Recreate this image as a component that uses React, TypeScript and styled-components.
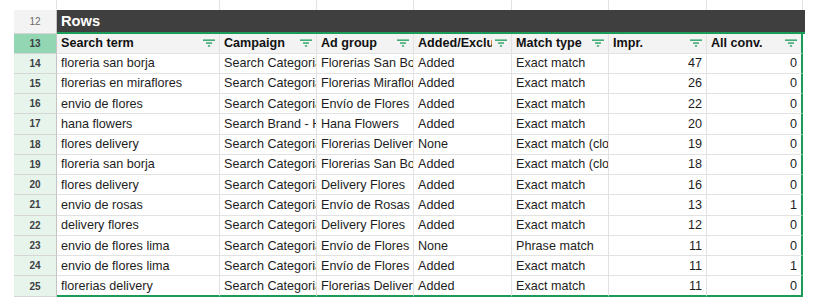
import styled, { createGlobalStyle } from 'styled-components';

const GlobalStyle = createGlobalStyle`
    body {
        margin: 0;
        background: #ffffff;
        font-family: "Liberation Sans", Arial, sans-serif;
    }
`

const COLS = '43px 163px 97px 97px 98px 97px 98px 96px';
const GREEN = '#1a9b57';
const GRID = '#e2e2e2';

const Sheet = styled.div`
    padding-left: 14px;
    width: 789px;
`

const Row = styled.div<{ $h: number }>`
    display: grid;
    grid-template-columns: ${COLS};
    height: ${(p) => p.$h}px;
`

const RowNum = styled.div<{ $tone: 'plain' | 'active' | 'range' | 'blank' }>`
    display: flex;
    align-items: center;
    justify-content: center;
    font-size: 10px;
    font-weight: ${(p) => (p.$tone === 'plain' ? 400 : 600)};
    color: ${(p) => (p.$tone === 'plain' ? '#6b6b6b' : '#3c4043')};
    background: ${(p) =>
        p.$tone === 'active' ? '#93d6b3' : p.$tone === 'range' ? '#e7f4ec' : p.$tone === 'plain' ? '#f3f3f3' : '#ffffff'};
    border-right: 1px solid ${(p) => (p.$tone === 'blank' ? GRID : '#c4c4c4')};
    border-bottom: 1px solid ${(p) => (p.$tone === 'blank' ? 'transparent' : '#d6d6d6')};
    box-sizing: border-box;
`

const Blank = styled.div`
    border-right: 1px solid ${GRID};
    box-sizing: border-box;
`

const Title = styled.div`
    grid-column: span 7;
    margin-right: -2px;
    background: #3f3f3f;
    color: #ffffff;
    font-weight: 700;
    font-size: 14.7px;
    display: flex;
    align-items: center;
    padding-left: 4px;
    border-bottom: 2px solid ${GREEN};
    box-sizing: border-box;
`

const HeadCell = styled.div<{ $last?: boolean }>`
    display: flex;
    align-items: center;
    gap: 3px;
    padding: 0 4px 0 4px;
    background: #f3f3f3;
    border-right: ${(p) => (p.$last ? `2px solid ${GREEN}` : `1px solid ${GRID}`)};
    border-bottom: 1px solid ${GRID};
    box-sizing: border-box;
    overflow: hidden;
`

const HeadLabel = styled.span`
    flex: 1;
    font-size: 12.6px;
    font-weight: 700;
    color: #111;
    white-space: nowrap;
    overflow: hidden;
`

const Cell = styled.div<{ $num?: boolean; $last?: boolean; $bottom?: boolean }>`
    display: flex;
    align-items: center;
    justify-content: ${(p) => (p.$num ? 'flex-end' : 'flex-start')};
    padding: 0 4px;
    font-size: 12.6px;
    color: #1d1d1d;
    white-space: nowrap;
    overflow: hidden;
    border-right: ${(p) => (p.$last ? `2px solid ${GREEN}` : `1px solid ${GRID}`)};
    border-bottom: ${(p) => (p.$bottom ? `2px solid ${GREEN}` : `1px solid ${GRID}`)};
    box-sizing: border-box;
`

const FilterIcon = () => (
    <svg width="12" height="8" viewBox="0 0 12 8" style={{ flex: 'none' }}>
        <rect x="0" y="0.5" width="12" height="1.3" fill={GREEN} />
        <rect x="3" y="3.4" width="6" height="1.3" fill={GREEN} />
        <rect x="4.9" y="6.3" width="2.2" height="1.3" fill={GREEN} />
    </svg>
)

const headers = ['Search term', 'Campaign', 'Ad group', 'Added/Excluded', 'Match type', 'Impr.', 'All conv.'];

const rows = [
    { n: 14, term: 'floreria san borja', camp: 'Search Categorias', group: 'Florerias San Borja', added: 'Added', match: 'Exact match', impr: 47, conv: 0 },
    { n: 15, term: 'florerias en miraflores', camp: 'Search Categorias', group: 'Florerias Miraflores', added: 'Added', match: 'Exact match', impr: 26, conv: 0 },
    { n: 16, term: 'envio de flores', camp: 'Search Categorias', group: 'Envío de Flores', added: 'Added', match: 'Exact match', impr: 22, conv: 0 },
    { n: 17, term: 'hana flowers', camp: 'Search Brand - Hana', group: 'Hana Flowers', added: 'Added', match: 'Exact match', impr: 20, conv: 0 },
    { n: 18, term: 'flores delivery', camp: 'Search Categorias', group: 'Florerias Delivery', added: 'None', match: 'Exact match (close variant)', impr: 19, conv: 0 },
    { n: 19, term: 'floreria san borja', camp: 'Search Categorias', group: 'Florerias San Borja', added: 'Added', match: 'Exact match (close variant)', impr: 18, conv: 0 },
    { n: 20, term: 'flores delivery', camp: 'Search Categorias', group: 'Delivery Flores', added: 'Added', match: 'Exact match', impr: 16, conv: 0 },
    { n: 21, term: 'envio de rosas', camp: 'Search Categorias', group: 'Envío de Rosas', added: 'Added', match: 'Exact match', impr: 13, conv: 1 },
    { n: 22, term: 'delivery flores', camp: 'Search Categorias', group: 'Delivery Flores', added: 'Added', match: 'Exact match', impr: 12, conv: 0 },
    { n: 23, term: 'envio de flores lima', camp: 'Search Categorias', group: 'Envío de Flores', added: 'None', match: 'Phrase match', impr: 11, conv: 0 },
    { n: 24, term: 'envio de flores lima', camp: 'Search Categorias', group: 'Envío de Flores Lima', added: 'Added', match: 'Exact match', impr: 11, conv: 1 },
    { n: 25, term: 'florerias delivery', camp: 'Search Categorias', group: 'Florerias Delivery', added: 'Added', match: 'Exact match', impr: 11, conv: 0 },
]

const App = () => {
    return (
        <Sheet>
            <GlobalStyle />
            <Row $h={10}>
                <RowNum $tone="blank" />
                {headers.map((h) => <Blank key={h} />)}
            </Row>
            <Row $h={24}>
                <RowNum $tone="plain">12</RowNum>
                <Title>Rows</Title>
            </Row>
            <Row $h={19.5}>
                <RowNum $tone="active">13</RowNum>
                {headers.map((h, i) => (
                    <HeadCell key={h} $last={i === headers.length - 1}>
                        <HeadLabel>{h}</HeadLabel>
                        <FilterIcon />
                    </HeadCell>
                ))}
            </Row>
            {rows.map((r, i) => {
                const bottom = i === rows.length - 1;
                return (
                    <Row $h={20.28} key={r.n}>
                        <RowNum $tone="range">{r.n}</RowNum>
                        <Cell $bottom={bottom}>{r.term}</Cell>
                        <Cell $bottom={bottom}>{r.camp}</Cell>
                        <Cell $bottom={bottom}>{r.group}</Cell>
                        <Cell $bottom={bottom}>{r.added}</Cell>
                        <Cell $bottom={bottom}>{r.match}</Cell>
                        <Cell $bottom={bottom} $num>{r.impr}</Cell>
                        <Cell $bottom={bottom} $num $last>{r.conv}</Cell>
                    </Row>
                )
            })}
        </Sheet>
    )
}

export default App
